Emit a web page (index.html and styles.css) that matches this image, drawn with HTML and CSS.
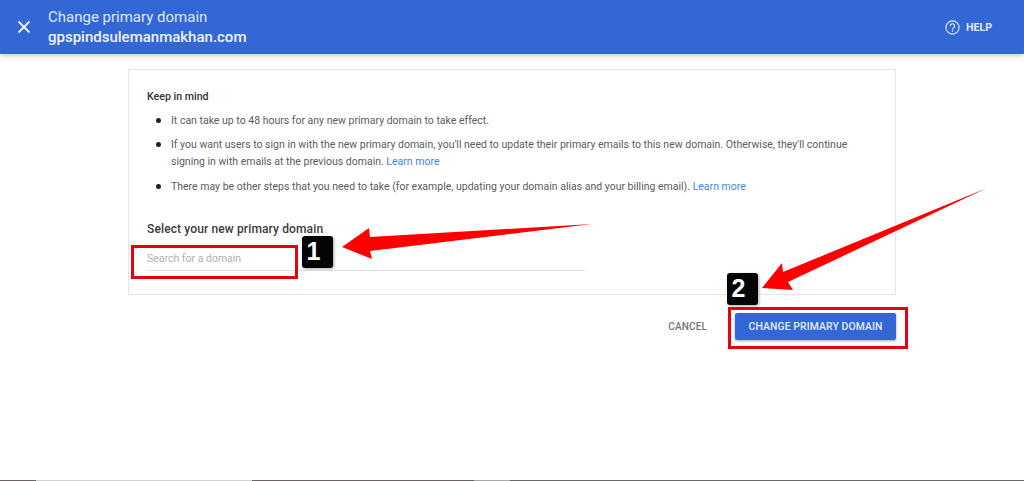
FILE: index.html
```html
<!DOCTYPE html>
<html lang="en">
<head>
<meta charset="utf-8">
<title>Change primary domain</title>
<link rel="stylesheet" href="styles.css">
</head>
<body>
<div class="page">
  <header class="topbar">
    <button class="close" aria-label="Close">
      <svg width="14" height="14" viewBox="0 0 14 14"><path d="M1.5 1.5L12.5 12.5M12.5 1.5L1.5 12.5" stroke="#e8eefb" stroke-width="2" fill="none"/></svg>
    </button>
    <div class="titles">
      <div class="title">Change primary domain</div>
      <div class="domain">gpspindsulemanmakhan.com</div>
    </div>
    <div class="help">
      <svg width="15" height="15" viewBox="0 0 15 15"><circle cx="7.5" cy="7.5" r="6.6" stroke="#e3eafa" stroke-width="1.1" fill="none"/><path d="M5.4 5.9a2.1 2.1 0 1 1 3.4 1.6c-.8.6-1.3 1-1.3 2" stroke="#e3eafa" stroke-width="1.2" fill="none"/><circle cx="7.5" cy="11.1" r=".8" fill="#e3eafa"/></svg>
      <span>HELP</span>
    </div>
  </header>
  <main class="content">
    <section class="card">
      <h2 class="keep">Keep in mind</h2>
      <ul class="notes">
        <li>It can take up to 48 hours for any new primary domain to take effect.</li>
        <li>If you want users to sign in with the new primary domain, you'll need to update their primary emails to this new domain. Otherwise, they'll continue signing in with emails at the previous domain. <a href="#">Learn more</a></li>
        <li>There may be other steps that you need to take (for example, updating your domain alias and your billing email). <a href="#">Learn more</a></li>
      </ul>
      <h3 class="select">Select your new primary domain</h3>
      <input class="search" type="text" placeholder="Search for a domain">
    </section>
    <div class="actions">
      <button class="cancel">CANCEL</button>
      <button class="primary">CHANGE PRIMARY DOMAIN</button>
    </div>
  </main>
  <div class="strip"><i class="d1"></i><i class="l1"></i><i class="d2"></i><i class="l2"></i><i class="d3"></i></div>

  <svg class="arrows" width="1024" height="481" viewBox="0 0 1024 481">
    <path d="M342 247L369 228L370 237L592 224L370 251L372 259Z" fill="#f00"/>
    <path d="M762 288L782 263L783 272L987 188L788 282L793 290Z" fill="#f00"/>
  </svg>
  <div class="redbox box-a"></div>
  <div class="redbox box-b"></div>
  <div class="badge badge-a">1</div>
  <div class="badge badge-b">2</div>
</div>
</body>
</html>
```
FILE: styles.css
```css
* { box-sizing: border-box; }
html, body { margin: 0; height: 100%; background: #fff; }
body { font-family: Roboto, "Liberation Sans", sans-serif; overflow: hidden; }
.page { position: relative; width: 1024px; height: 481px; overflow: hidden; display: flex; flex-direction: column; }

.topbar { height: 54px; flex: none; background: #3367d6; color: #e8eefb; display: flex; align-items: center; box-shadow: 0 1px 5px rgba(0,0,0,.28); position: relative; }
.close { border: 0; background: none; padding: 0; margin-left: 17px; width: 14px; height: 14px; display: flex; }
.titles { margin-left: 17px; }
.title { font-size: 15px; line-height: 20px; color: #dfe7f9; }
.domain { font-size: 15px; line-height: 20px; font-weight: 500; color: #eef2fc; }
.help { margin-left: auto; margin-right: 32px; display: flex; align-items: center; gap: 6px; font-size: 10.6px; font-weight: 700; color: #e3eafa; }

.content { width: 768px; margin: 15px 0 0 128px; flex: 1; }
.card { height: 226px; border: 1px solid #e4e4e4; padding: 20px 18px 0; }
.keep { margin: 0 0 7.5px; font-size: 10.6px; line-height: 14px; font-weight: 500; color: #333; }
.notes { margin: 0; padding: 0 0 0 24px; font-size: 10.5px; line-height: 17px; color: #5c5c5c; list-style: none; }
.notes li { position: relative; margin-bottom: 7.5px; }
.notes li::before { content: ""; position: absolute; left: -15px; top: 6px; width: 5px; height: 5px; border-radius: 50%; background: #222; }
.notes a { color: #3f86e8; text-decoration: none; }
.select { margin: 26px 0 0; font-size: 12px; line-height: 16px; font-weight: 500; color: #3c3c3c; letter-spacing: .13px; }
.search { display: block; width: 438px; height: 27px; margin-top: 7px; padding: 3px 0 0; border: 0; border-bottom: 1px solid #e2e2e2; outline: 0; font: 10.5px Roboto, sans-serif; background: none; }
.search::placeholder { color: #b0b0b0; opacity: 1; }

.actions { display: flex; justify-content: flex-end; align-items: center; margin-top: 18px; gap: 28px; }
.cancel { border: 0; background: none; padding: 0; font: 500 10.1px Roboto, sans-serif; color: #767676; letter-spacing: .1px; }
.primary { width: 161px; height: 27px; border: 0; border-radius: 2px; background: #3367d6; color: #e6ecfa; font: 500 10.4px Roboto, sans-serif; letter-spacing: .1px; box-shadow: 0 1px 3px rgba(0,0,0,.35); padding: 0; }

.strip { position: absolute; left: 0; right: 0; bottom: 0; height: 1px; display: flex; }
.strip i { display: block; height: 1px; }
.d1 { width: 36px; background: #6f5f63; }
.l1 { width: 216px; background: #d2d0d0; }
.d2 { width: 222px; background: #6f5f63; }
.l2 { width: 36px; background: #aaa6a6; }
.d3 { flex: 1; background: #6f6468; }

.arrows { position: absolute; left: 0; top: 0; pointer-events: none; }
.redbox { position: absolute; border: 3px solid #e8000f; }
.box-a { left: 131px; top: 245px; width: 167px; height: 34px; }
.box-b { left: 728px; top: 307px; width: 180px; height: 42px; }
.badge { position: absolute; width: 31px; height: 32px; padding-right: 8px; background: #050505; border-radius: 3px; color: #fff; font: 700 25px/31px "Liberation Sans", sans-serif; text-align: center; box-shadow: 1px 1px 3px rgba(0,0,0,.35); }
.badge-a { left: 302px; top: 236px; }
.badge-b { left: 727px; top: 273px; }
```
